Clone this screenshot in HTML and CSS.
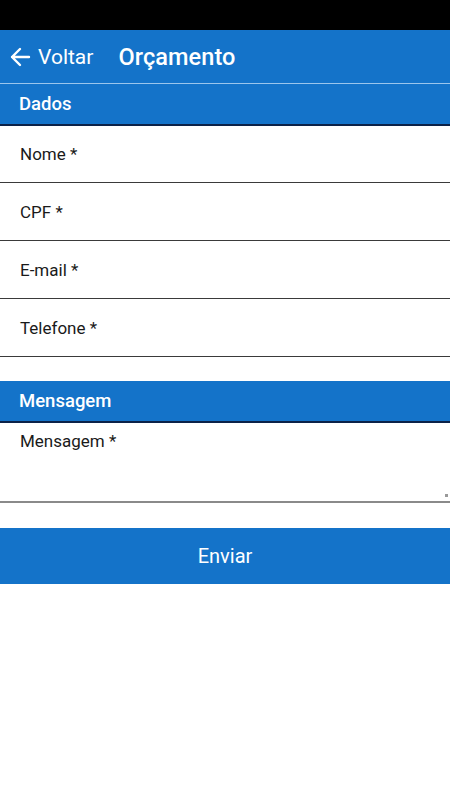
FILE: index.html
```html
<!DOCTYPE html>
<html lang="pt">
<head>
<meta charset="utf-8">
<title>Orçamento</title>
<link rel="stylesheet" href="styles.css">
</head>
<body>
<div class="status"></div>
<header class="topbar">
  <a class="back">
    <svg class="arrow" width="22" height="22" viewBox="0 0 22 22"><path d="M20 11H3M11 3L3 11l8 8" fill="none" stroke="#fff" stroke-width="2.4" stroke-linecap="round" stroke-linejoin="round"/></svg>
    <span>Voltar</span>
  </a>
  <h1 class="title">Orçamento</h1>
</header>
<section class="section">
  <div class="section-head">Dados</div>
  <div class="field"><span>Nome *</span></div>
  <div class="field"><span>CPF *</span></div>
  <div class="field"><span>E-mail *</span></div>
  <div class="field"><span>Telefone *</span></div>
</section>
<section class="section gap">
  <div class="section-head">Mensagem</div>
  <div class="textarea"><span>Mensagem *</span><i class="grip"></i></div>
</section>
<button class="send">Enviar</button>
</body>
</html>
```
FILE: styles.css
```css
html, body { margin: 0; padding: 0; background: #fff; }
body { font-family: Roboto, "Noto Sans", Arial, sans-serif; color: #1a1a1a; width: 450px; }
.status { height: 30px; background: #000; }
.topbar { height: 53px; background: #1473c9; display: flex; align-items: center; border-bottom: 1px solid #9cc6ec; }
.back { display: flex; align-items: center; color: #fff; font-size: 21px; padding-left: 9px; gap: 7px; }
.arrow { display: block; }
.title { margin: 0 0 0 25px; color: #fff; font-size: 23.5px; font-weight: 500; letter-spacing: 0.1px; }
.section-head { height: 40px; background: #1473c9; color: #fff; font-size: 18.5px; font-weight: 500; display: flex; align-items: center; padding-left: 19px; border-bottom: 2px solid #0c2248; }
.field { height: 57px; display: flex; align-items: center; padding-left: 20px; font-size: 17px; border-bottom: 1px solid #3a3a3a; }
.field:nth-child(2) { height: 56px; }
.gap { margin-top: 24px; }
.textarea { position: relative; height: 80px; padding: 8px 0 0 20px; box-sizing: border-box; font-size: 17px; border-bottom: 2px solid #8a8a8a; }
.grip { position: absolute; right: 2px; bottom: 4px; width: 3px; height: 3px; background: #999; }
.send { display: block; width: 100%; margin-top: 25px; height: 56px; border: 0; background: #1473c9; color: #fff; font-family: Roboto, Arial, sans-serif; font-size: 20px; padding: 0; }
```
